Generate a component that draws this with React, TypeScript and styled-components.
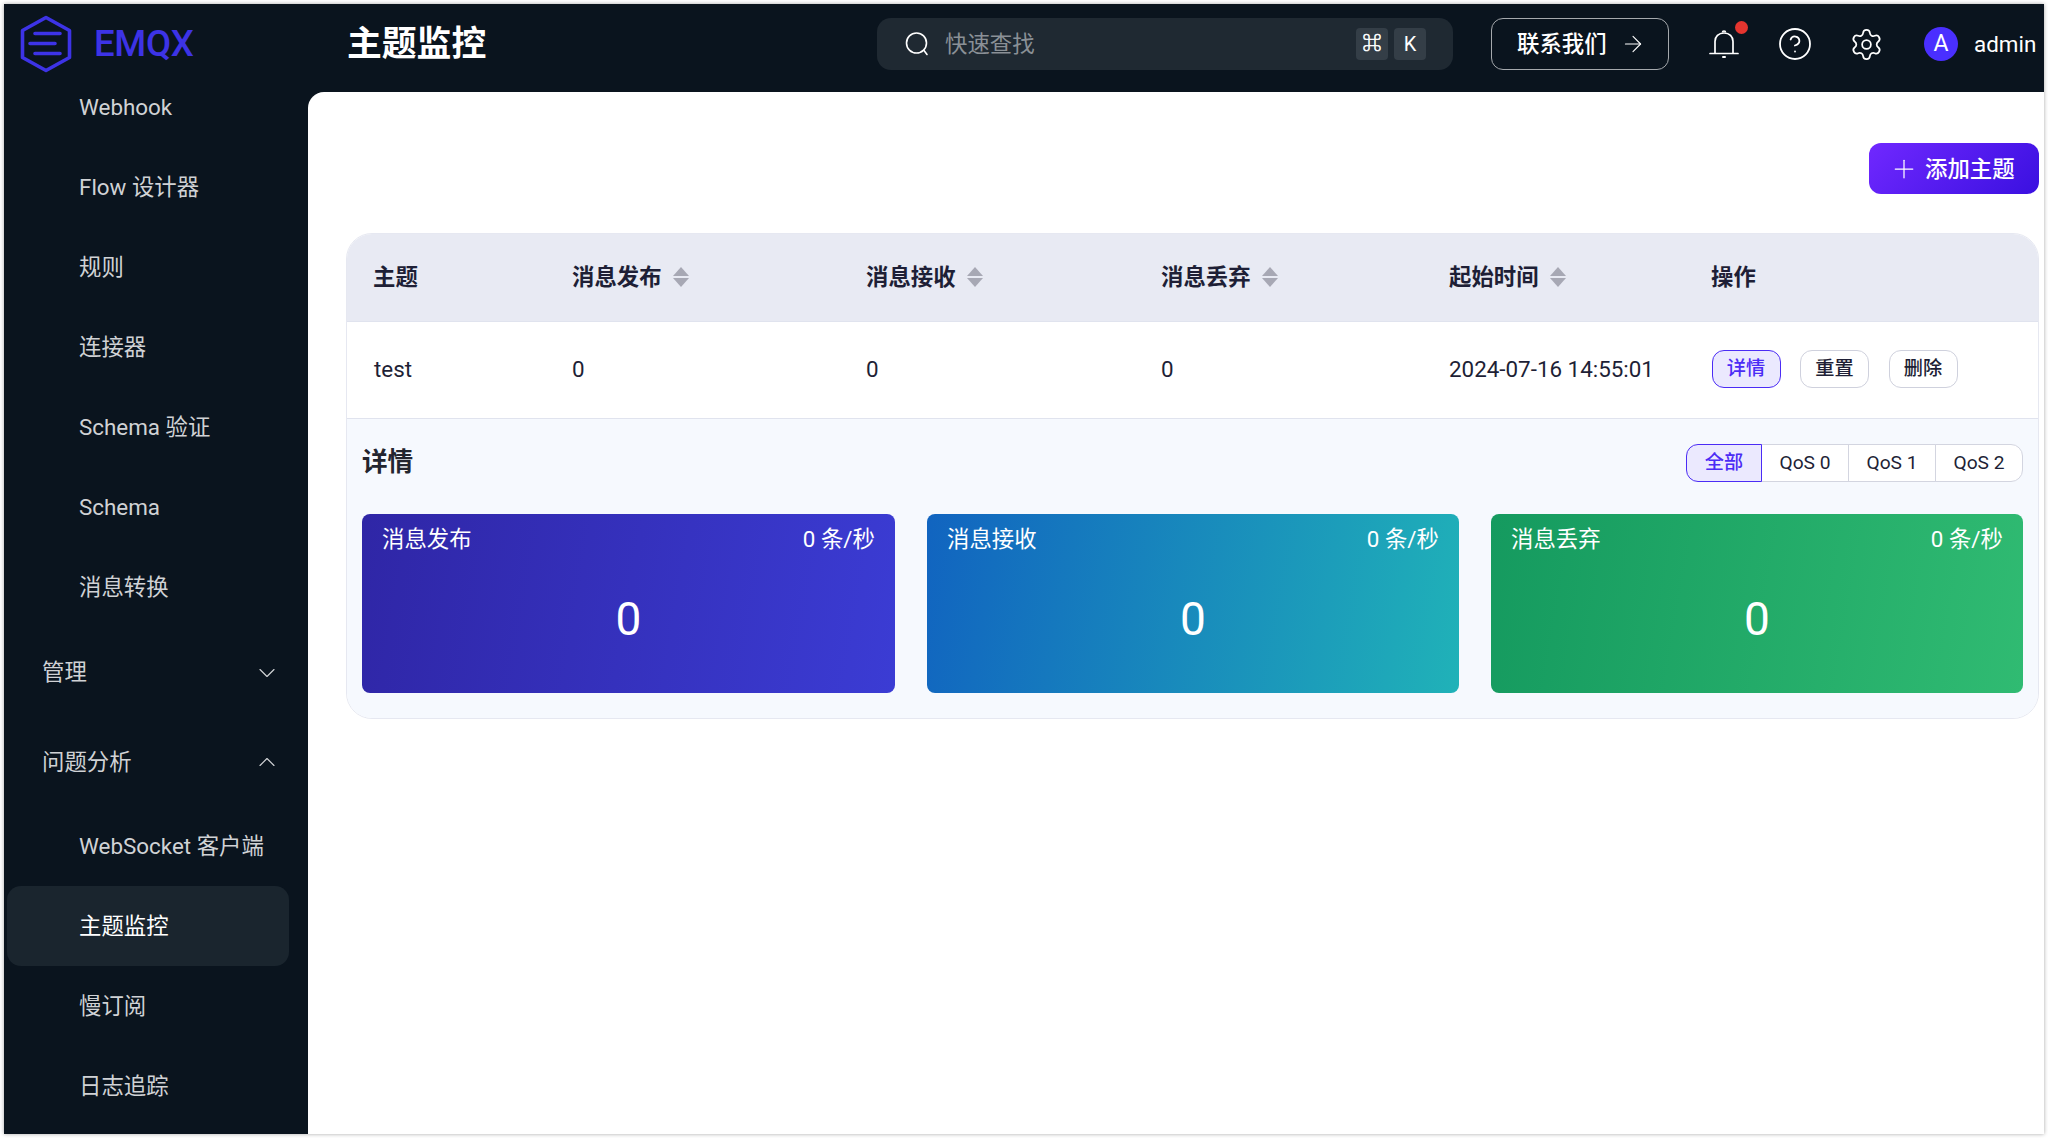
import React from "react";
import styled, { createGlobalStyle } from "styled-components";
import { ArrowRight, ChevronDown, ChevronUp, CircleHelp, Plus, Settings } from "lucide-react";

const GlobalStyle = createGlobalStyle`
  * { box-sizing: border-box; }
  html, body {
    margin: 0;
    padding: 0;
    background: #fff;
    overflow: hidden;
  }
  body {
    font-family: Roboto, "Noto Sans CJK SC", sans-serif;
    font-size: 22.4px;
    line-height: 1.25;
  }
`;

const Frame = styled.div`
  width: 2040px;
  height: 1130px;
  margin: 4px;
  display: flex;
  flex-direction: column;
  overflow: hidden;
  background: #fff;
  box-shadow: 0 0 4px rgba(0, 0, 0, 0.35);
`;

/* top bar */
const Header = styled.header`
  height: 88px;
  flex: none;
  display: flex;
  align-items: center;
  padding-bottom: 8px;
  background: #0a141e;
  color: #fff;
`;
const Brand = styled.div`
  width: 343px;
  flex: none;
  display: flex;
  align-items: center;
  padding-left: 16px;
`;
const BrandName = styled.span`
  margin-left: 22px;
  padding-bottom: 1px;
  font-size: 36.5px;
  font-weight: 500;
  color: #3d33e6;
  letter-spacing: -0.3px;
`;
const PageTitle = styled.h1`
  width: 530px;
  flex: none;
  margin: 0;
  padding-top: 2px;
  font-size: 34.8px;
  font-weight: 700;
  line-height: 1.25;
`;
const Search = styled.div`
  width: 576px;
  height: 52px;
  flex: none;
  display: flex;
  align-items: center;
  padding: 0 27px 0 28px;
  border-radius: 14px;
  background: #1f2932;
`;
const SearchText = styled.span`
  flex: 1;
  margin-left: 16px;
  color: #8a9096;
`;
const Kbd = styled.span`
  width: 32px;
  height: 32px;
  margin-left: 6px;
  display: flex;
  align-items: center;
  justify-content: center;
  border-radius: 4px;
  background: #343e47;
  font-size: 20px;
`;
const CommandKey = styled(Kbd)`
  font-size: 19px;
  -webkit-text-stroke: 0.6px #fff;
`;
const ContactButton = styled.button`
  width: 178px;
  height: 52px;
  flex: none;
  margin-left: 38px;
  display: flex;
  align-items: center;
  padding: 0 0 0 25px;
  border: 1px solid #a5a9ad;
  border-radius: 12px;
  background: transparent;
  color: #fff;
  font: 500 22.4px/1.25 Roboto, "Noto Sans CJK SC", sans-serif;
  svg { margin-left: 13px; }
`;
const IconSlot = styled.span<{ $gap: number }>`
  position: relative;
  width: 30px;
  height: 30px;
  flex: none;
  margin-left: ${p => p.$gap}px;
  display: flex;
  align-items: center;
  justify-content: center;
  svg { flex: none; }
`;
const RedDot = styled.span`
  position: absolute;
  top: -8px;
  right: -9px;
  width: 13px;
  height: 13px;
  border-radius: 50%;
  background: #e5352f;
`;
const Avatar = styled.span`
  width: 34px;
  height: 34px;
  flex: none;
  margin-left: 43px;
  display: flex;
  align-items: center;
  justify-content: center;
  border-radius: 50%;
  background: #4a2fff;
  font-size: 23px;
`;
const UserName = styled.span`
  margin-left: 16px;
`;

/* below the bar */
const Body = styled.div`
  flex: 1;
  min-height: 0;
  display: flex;
  background: #0a141e;
`;
const Sidebar = styled.nav`
  width: 304px;
  flex: none;
  overflow: hidden;
`;
const MenuList = styled.div`
  margin-top: -25px;
  padding-left: 3px;
  width: 285px;
`;
const MenuItem = styled.div<{ $active?: boolean }>`
  height: 80px;
  display: flex;
  align-items: center;
  padding-left: 72px;
  border-radius: 14px;
  color: ${p => (p.$active ? "#fff" : "#d0d2d5")};
  background: ${p => (p.$active ? "#1a252e" : "transparent")};
  white-space: nowrap;
`;
const MenuGroup = styled.div`
  height: 89.5px;
  display: flex;
  align-items: center;
  justify-content: space-between;
  padding: 1px 8px 0 35px;
  color: #d0d2d5;
  svg { margin-top: 1px; }
`;

const Main = styled.main`
  flex: 1;
  min-width: 0;
  padding: 51px 5px 0 38px;
  background: #fff;
  border-top-left-radius: 16px;
`;
const Toolbar = styled.div`
  display: flex;
  justify-content: flex-end;
  margin-bottom: 39px;
`;
const AddButton = styled.button`
  width: 170px;
  height: 51px;
  display: flex;
  align-items: center;
  padding: 0 0 0 20px;
  border: none;
  border-radius: 12px;
  background: linear-gradient(135deg, #7028ff, #3a10e0);
  color: #fff;
  font: 500 22.4px/1.25 Roboto, "Noto Sans CJK SC", sans-serif;
  svg { margin-right: 6px; }
`;

/* table */
const Table = styled.div`
  border: 1px solid #e6e8f1;
  border-radius: 26px;
  overflow: hidden;
  color: #1e1f36;
`;
const Row = styled.div<{ $head?: boolean }>`
  height: ${p => (p.$head ? 88 : 97)}px;
  display: grid;
  grid-template-columns: 199px 294px 295px 288px 262px 1fr;
  align-items: center;
  padding: 0 0 2px 26px;
  background: ${p => (p.$head ? "#e8eaf3" : "#fff")};
  border-bottom: 1px solid #e0e3ee;
  font-weight: ${p => (p.$head ? 700 : 400)};
`;
const HeadCell = styled.div`
  display: flex;
  align-items: center;
  gap: 11px;
`;
const TopicName = styled.div`
  padding-left: 1px;
`;
const Actions = styled.div`
  display: flex;
  gap: 19.5px;
  margin-left: 0.5px;
`;
const ActionButton = styled.button<{ $primary?: boolean }>`
  width: 69px;
  height: 38px;
  padding: 0;
  border: 1px solid ${p => (p.$primary ? "#4b2cf5" : "#cfd1dd")};
  border-radius: 12px;
  background: ${p => (p.$primary ? "#ebe9fe" : "#fff")};
  color: ${p => (p.$primary ? "#4b2cf5" : "#1e1f36")};
  font: 500 19.2px/1.25 Roboto, "Noto Sans CJK SC", sans-serif;
`;

/* details */
const Details = styled.section`
  height: 299px;
  padding: 25px 15px 0 15px;
  background: #f6f9fe;
`;
const DetailsHead = styled.div`
  height: 38px;
  display: flex;
  align-items: center;
  justify-content: space-between;
  margin-bottom: 32px;
`;
const DetailsTitle = styled.h3`
  margin: 0;
  font-size: 25.6px;
  font-weight: 700;
  color: #23252f;
`;
const Segments = styled.div`
  display: flex;
`;
const Segment = styled.button<{ $active?: boolean }>`
  width: ${p => (p.$active ? 76 : 88)}px;
  height: 38px;
  padding: 0;
  margin-left: -1px;
  border: 1px solid ${p => (p.$active ? "#4b2cf5" : "#d3d5e0")};
  background: ${p => (p.$active ? "#ebe9fe" : "#fff")};
  color: ${p => (p.$active ? "#4b2cf5" : "#1e1f36")};
  font: ${p => (p.$active ? 500 : 400)} 19.2px/1.25 Roboto, "Noto Sans CJK SC", sans-serif;
  position: relative;
  z-index: ${p => (p.$active ? 1 : 0)};
  &:first-child { margin-left: 0; border-radius: 12px 0 0 12px; }
  &:last-child { border-radius: 0 12px 12px 0; }
`;
const Cards = styled.div`
  display: grid;
  grid-template-columns: 533px 532px 532px;
  gap: 32px;
`;
const Card = styled.div<{ $from: string; $to: string }>`
  height: 179px;
  padding: 9px 20px 0 20px;
  border-radius: 8px;
  background: linear-gradient(100deg, ${p => p.$from}, ${p => p.$to});
  color: #fff;
`;
const CardTop = styled.div`
  display: flex;
  justify-content: space-between;
  line-height: 32px;
`;
const CardValue = styled.div`
  margin-top: 37px;
  text-align: center;
  font-size: 46px;
  line-height: 54px;
`;

const LogoIcon = () => (
  <svg width="52" height="58" viewBox="0 0 52 58" fill="none" stroke="#3d33e6">
    <path d="M26 2.500 49.500 15.500V42.500L26 55.500 2.500 42.500V15.500Z" strokeWidth="3.600" strokeLinejoin="round" />
    <path d="M15 18.500H40M10 28.500H35M15 38.500H40" strokeWidth="3.600" strokeLinecap="round" />
  </svg>
);
const SearchIcon = () => (
  <svg width="24" height="24" viewBox="0 0 24 24" fill="none" stroke="#fff" strokeWidth="1.600">
    <circle cx="11.500" cy="11" r="10" />
    <path d="M19 18.500 22 22.500" strokeLinecap="round" />
  </svg>
);
const BellIcon = () => (
  <svg width="30" height="30" viewBox="0 0 30 30" fill="none" stroke="#fff" strokeWidth="1.700">
    <path d="M6 24.500V12.500C6 7.500 9.500 4 15 4S24 7.500 24 12.500V24.500" />
    <path d="M1 24.500H29" strokeLinecap="round" />
    <path d="M13.500 3.500C13.500 1.500 16.500 1.500 16.500 3.500" />
    <path d="M14 28H16" strokeLinecap="round" strokeWidth="2" />
  </svg>
);
const SortIcon = () => (
  <svg width="16" height="20" viewBox="0 0 16 20" fill="#a7a8b4">
    <path d="M8 0 16 9H0Z" />
    <path d="M0 11H16L8 20Z" />
  </svg>
);

const menuTop = ["Webhook", "Flow 设计器", "规则", "连接器", "Schema 验证", "Schema", "消息转换"];
const menuBottom = ["WebSocket 客户端", "主题监控", "慢订阅", "日志追踪"];
const columns = ["消息发布", "消息接收", "消息丢弃", "起始时间"];
const cards = [
  { title: "消息发布", from: "#2f26a6", to: "#3b3cd4" },
  { title: "消息接收", from: "#1164c0", to: "#20b2b8" },
  { title: "消息丢弃", from: "#159a5f", to: "#30bb72" },
];

export default function App() {
  return (
    <Frame>
      <GlobalStyle />
      <Header>
        <Brand>
          <LogoIcon />
          <BrandName>EMQX</BrandName>
        </Brand>
        <PageTitle>主题监控</PageTitle>
        <Search>
          <SearchIcon />
          <SearchText>快速查找</SearchText>
          <CommandKey>⌘</CommandKey>
          <Kbd>K</Kbd>
        </Search>
        <ContactButton>
          联系我们
          <ArrowRight size={26} strokeWidth={1} />
        </ContactButton>
        <IconSlot $gap={40}>
          <BellIcon />
          <RedDot />
        </IconSlot>
        <IconSlot $gap={41}>
          <CircleHelp size={36} strokeWidth={1.2} />
        </IconSlot>
        <IconSlot $gap={41}>
          <Settings size={35} strokeWidth={1.2} />
        </IconSlot>
        <Avatar>A</Avatar>
        <UserName>admin</UserName>
      </Header>
      <Body>
        <Sidebar>
          <MenuList>
            {menuTop.map(label => (
              <MenuItem key={label}>{label}</MenuItem>
            ))}
            <MenuGroup>
              管理
              <ChevronDown size={28} strokeWidth={1} />
            </MenuGroup>
            <MenuGroup>
              问题分析
              <ChevronUp size={28} strokeWidth={1} />
            </MenuGroup>
            {menuBottom.map(label => (
              <MenuItem key={label} $active={label === "主题监控"}>
                {label}
              </MenuItem>
            ))}
          </MenuList>
        </Sidebar>
        <Main>
          <Toolbar>
            <AddButton>
              <Plus size={30} strokeWidth={1} />
              添加主题
            </AddButton>
          </Toolbar>
          <Table>
            <Row $head>
              <HeadCell>主题</HeadCell>
              {columns.map(label => (
                <HeadCell key={label}>
                  {label}
                  <SortIcon />
                </HeadCell>
              ))}
              <HeadCell>操作</HeadCell>
            </Row>
            <Row>
              <TopicName>test</TopicName>
              <div>0</div>
              <div>0</div>
              <div>0</div>
              <div>2024-07-16 14:55:01</div>
              <Actions>
                <ActionButton $primary>详情</ActionButton>
                <ActionButton>重置</ActionButton>
                <ActionButton>删除</ActionButton>
              </Actions>
            </Row>
            <Details>
              <DetailsHead>
                <DetailsTitle>详情</DetailsTitle>
                <Segments>
                  <Segment $active>全部</Segment>
                  <Segment>QoS 0</Segment>
                  <Segment>QoS 1</Segment>
                  <Segment>QoS 2</Segment>
                </Segments>
              </DetailsHead>
              <Cards>
                {cards.map(card => (
                  <Card key={card.title} $from={card.from} $to={card.to}>
                    <CardTop>
                      <span>{card.title}</span>
                      <span>0 条/秒</span>
                    </CardTop>
                    <CardValue>0</CardValue>
                  </Card>
                ))}
              </Cards>
            </Details>
          </Table>
        </Main>
      </Body>
    </Frame>
  );
}
